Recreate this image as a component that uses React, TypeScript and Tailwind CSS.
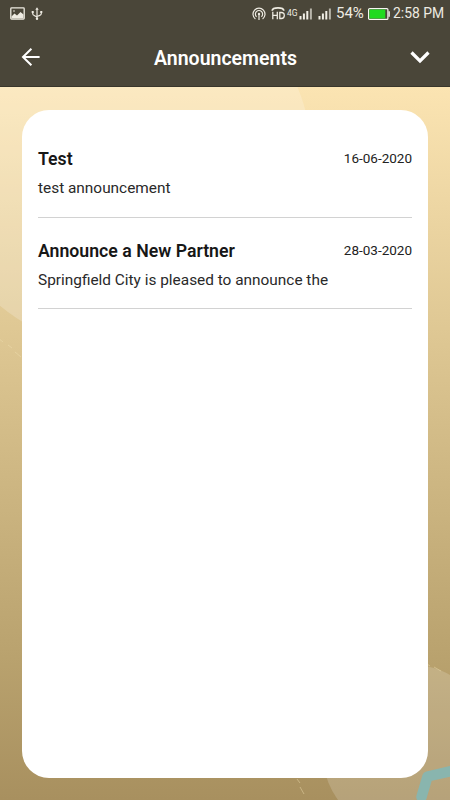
import React from "react";

const items = [
  { title: "Test", date: "16-06-2020", body: "test announcement" },
  { title: "Announce a New Partner", date: "28-03-2020", body: "Springfield City is pleased to announce the" },
];

function Backdrop() {
  return (
    <svg className="absolute inset-0" width="450" height="800" viewBox="0 0 450 800" fill="none">
      <defs>
        <linearGradient id="sand" x1="0" y1="87" x2="0" y2="800" gradientUnits="userSpaceOnUse">
          <stop offset="0" stopColor="#fbe4b2" />
          <stop offset="0.35" stopColor="#dec793" />
          <stop offset="0.8" stopColor="#b9a26e" />
          <stop offset="1" stopColor="#a8905f" />
        </linearGradient>
      </defs>
      <rect width="450" height="800" fill="url(#sand)" />
      <circle cx="122" cy="160" r="190" fill="#fff" fillOpacity="0.2" />
      <circle cx="408" cy="750" r="86" fill="#fff" fillOpacity="0.17" />
      <path d="M-2 338l5 4M8 345l4 3M15 352l6 5M427 664l3 2M434 667l7 4M297 779l3 4M300 787l4 7" stroke="#f2e0b4" strokeOpacity="0.55" strokeWidth="0.8" />
      <path d="M451 771L427.5 776.5L421.5 797" stroke="#89b5ae" strokeWidth="10.5" strokeLinejoin="round" strokeLinecap="round" />
    </svg>
  );
}

function Signal() {
  return (
    <svg width="14" height="12" viewBox="0 0 14 12" fill="#f2efe6" className="shrink-0">
      <path d="M0.5 8h2v3.5h-2zM3.9 5.5h2v6h-2zM7.3 3h2v8.5h-2z" />
      <path d="M10.9 0.5h2v11h-2z" fillOpacity="0.65" />
    </svg>
  );
}

export default function App() {
  return (
    <div className="relative flex h-[800px] w-[450px] flex-col overflow-hidden font-[Roboto,sans-serif]">
      <Backdrop />
      <header className="relative h-[87px] shrink-0 border-b border-[#39362b] bg-[#4a4639] text-white">
        <div className="flex h-[27px] items-center pr-[7px] pl-[10px] text-[#eeebe2]">
          <svg width="15" height="13" viewBox="0 0 15 13">
            <rect x="0.8" y="0.9" width="13.4" height="11.2" rx="0.8" fill="none" stroke="currentColor" strokeWidth="1.3" />
            <path d="M1.5 11.5V9.5L4.5 6.5L7 8.5L10.5 5L13.5 7.5V11.5Z" fill="currentColor" />
            <circle cx="4" cy="4" r="0.8" fill="currentColor" />
          </svg>
          <svg className="ml-[6px]" width="12" height="14" viewBox="0 0 12 14" fill="none" stroke="currentColor" strokeWidth="1.2">
            <path d="M6 2v9M1.7 5v1.5Q1.7 8 3.2 8.5L6 10M10.3 4.5V6.5Q10.3 8 8.8 8.4L6 9.5" />
            <path d="M6 0.2L4.3 2.7h3.4zM0.7 4h2v2h-2zM9.3 4h2v2h-2z" fill="currentColor" stroke="none" />
            <circle cx="6" cy="11.8" r="1.2" fill="currentColor" stroke="none" />
          </svg>
          <div className="ml-auto flex items-center">
            <svg width="14" height="14" viewBox="0 0 14 14" fill="none" stroke="currentColor" strokeWidth="1.2">
              <path d="M3.4 12A6 6 0 1 1 10.6 12M4.6 9.8A3.6 3.6 0 1 1 9.4 9.8M7 7v6" />
              <circle cx="7" cy="6.9" r="1.2" fill="currentColor" stroke="none" />
            </svg>
            <svg className="ml-[5px]" width="15" height="13" viewBox="0 0 15 13" fill="none" stroke="currentColor" strokeWidth="1.3">
              <path d="M1.2 3.8Q1.2 0.9 7 0.9T12.8 3.8" strokeWidth="1.7" />
              <path d="M1.8 4.8v7.4M6.3 4.8v7.4M1.8 8.4h4.5M8.8 5.5v6h1.5q3 0 3-3t-3-3z" />
            </svg>
            <span className="ml-px w-[12px] text-[8.5px] leading-none whitespace-nowrap">4G</span>
            <Signal />
            <div className="w-[5px]" />
            <Signal />
            <span className="ml-[4px] w-[32px] text-[15px] leading-none whitespace-nowrap">54%</span>
            <svg width="22" height="12" viewBox="0 0 22 12">
              <rect x="0.6" y="0.6" width="19.3" height="10.8" rx="1" fill="none" stroke="#f7f6f1" strokeWidth="1.2" />
              <rect x="1.5" y="1.5" width="15.8" height="9" fill="#20da20" />
              <path d="M20.5 3.2h1.3v5.6h-1.3z" fill="#f7f6f1" />
            </svg>
            <span className="ml-[3px] w-[50px] text-[13.9px] leading-none whitespace-nowrap">2:58 PM</span>
          </div>
        </div>
        <div className="flex h-[60px] items-center justify-between pr-[20px] pl-[21px]">
          <svg width="20" height="20" viewBox="0 0 20 20" fill="none" stroke="currentColor" strokeWidth="2">
            <path d="M18.6 10H2M10.4 1.7L2 10l8.4 8.3" />
          </svg>
          <h1 className="pt-[3px] text-[19.5px] leading-6 font-semibold whitespace-nowrap">Announcements</h1>
          <svg width="20" height="14" viewBox="0 0 20 14" fill="none" stroke="currentColor" strokeWidth="3.2">
            <path d="M1.5 2.5l8.5 8.5L18.5 2.5" />
          </svg>
        </div>
      </header>
      <main className="relative mx-[22px] mt-[23px] mb-[22px] flex-1 rounded-[27px] bg-white px-4 pt-[22px]">
        {items.map((item, i) => (
          <article key={item.title} className={i === 0 ? "h-[86px] border-b border-[#d2d2d2] pt-[14px]" : "h-[91px] border-b border-[#d2d2d2] pt-[20px]"}>
            <div className="flex items-start justify-between">
              <h2 className="pt-px text-[17.7px] leading-6 font-semibold text-[#171717]">{item.title}</h2>
              <time className="text-[13.5px] leading-6 text-[#222]">{item.date}</time>
            </div>
            <p className="mt-[5px] text-[15.4px] leading-6 whitespace-nowrap text-[#292929]">{item.body}</p>
          </article>
        ))}
      </main>
    </div>
  );
}
